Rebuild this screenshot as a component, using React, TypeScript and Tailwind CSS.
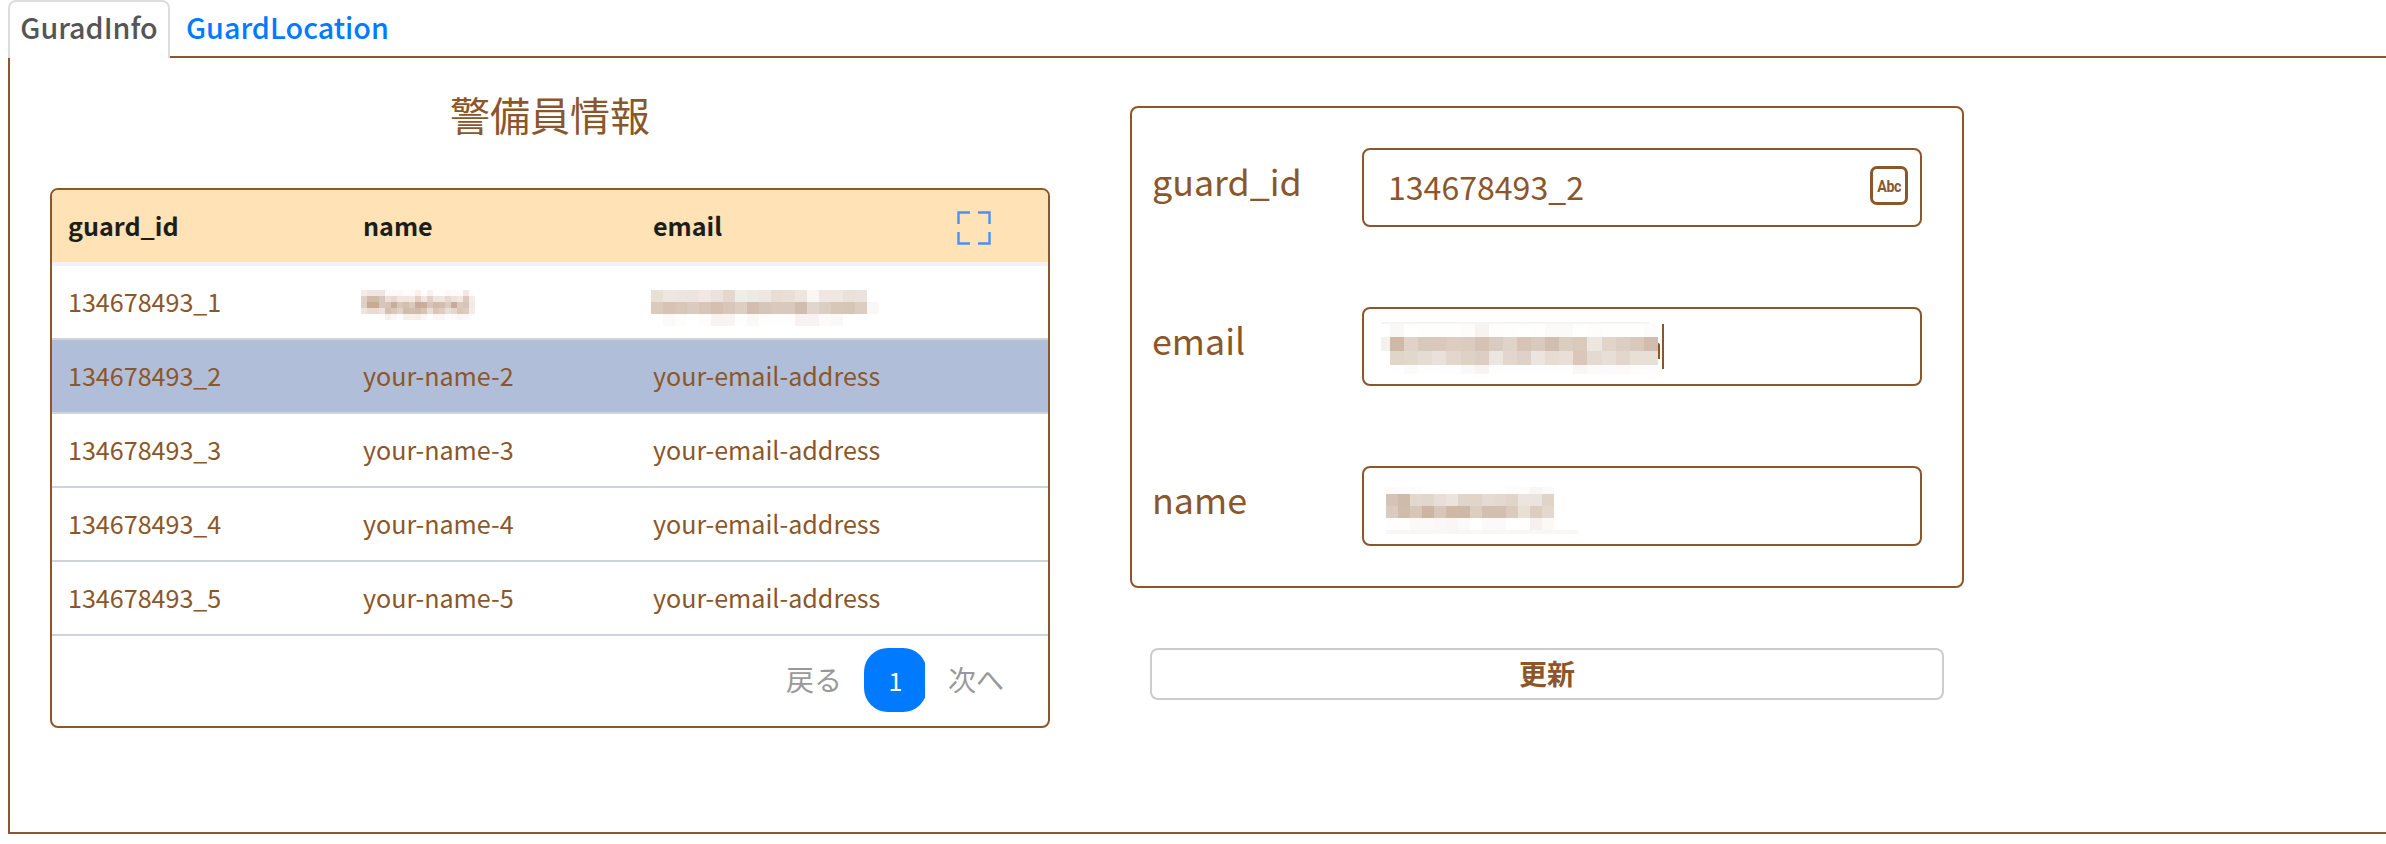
import React from "react";

const rows = [
  { id: "134678493_1", name: "", email: "" },
  { id: "134678493_2", name: "your-name-2", email: "your-email-address" },
  { id: "134678493_3", name: "your-name-3", email: "your-email-address" },
  { id: "134678493_4", name: "your-name-4", email: "your-email-address" },
  { id: "134678493_5", name: "your-name-5", email: "your-email-address" },
];

type Band = { y: number; h: number; x?: number; colors: string };

function Mosaic({ cell, width, height, bands, className }: { cell: number; width: number; height: number; bands: Band[]; className: string }) {
  return (
    <svg width={width} height={height} className={`overflow-visible ${className}`} shapeRendering="crispEdges">
      {bands.map((b, r) =>
        b.colors.split(" ").map((c, i) => (
          <rect key={`${r}-${i}`} x={(b.x ?? 0) + i * cell} y={b.y} width={cell} height={b.h} fill={`#${c}`} />
        )),
      )}
    </svg>
  );
}

const nameBands: Band[] = [
  { y: 0, h: 6, colors: "f3ece7 efe6e0 efe6e0 efe5e0 fdfaf8 fdfaf8 fcf8f6 fefdfc fefcfb f8f2ef fefdfc f8f3f0 fefdfc fefdfc fcf8f6 fdfaf8 fefcfb f1e8e3 fefdfc" },
  { y: 6, h: 6, colors: "e0d1c5 d0bba9 d0bba9 d8c6ba ece0da e6dad2 f0e5e0 efe4de f0e8e2 e1d0c6 f0e5df e0d2c7 efe5df efe6e0 e6d9d1 eee3dc f1e8e2 dccabf f4eeea" },
  { y: 12, h: 6, colors: "e0d0c4 c6aa92 c6aa92 dac5ba d8c4b6 c9ad9a dac6b9 d3bfae dbc9bc c8ab96 c9ae99 d8c5b8 d0bba8 d2beae dccbbf c9a999 dbc9bc d7c4b6 f1e9e4" },
  { y: 18, h: 6, colors: "f0e5de eadcd3 e9dbd2 eee2dc d4c0b1 d9c9bd e1d3c8 d1bca9 d2bdac d1bcab d6c4b5 eadfd8 d8c6b9 ddcdc2 eadfd8 e5d7cd d9c7bb dccbbf f4ece8" },
  { y: 24, h: 6, x: 18, colors: "fefdfc f6efeb fcf7f4 fefdfc f6f0ec f7f0ed f5efeb fbf6f3 fefdfc fcf6f3 fbf6f4 fefdfc fdf9f8 fbf6f4 fcf8f7" },
];

const emailBands: Band[] = [
  { y: 0, h: 12, colors: "e8dfd5 efe6e2 efe5e0 eee4df f2e7e5 ebe2de e4d7cf f0ece7 edeae4 eee7e1 e8ddd3 e9dfd6 eee5df f9f6f4 f1e7e2 f0e7e1 eae1db ebe2dd" },
  { y: 12, h: 12, colors: "dccbbd d6c3b6 d8c7b9 dbcabe d7c5b7 d3c0b1 d7c6b9 ddcec2 d2bdaf d8c5ba d9c8bc d9c8bc d1bdaf e2d5cd ddcec4 d7c7b9 d7c5b7 dccdc3 faf8f6" },
  { y: 24, h: 12, x: 12, colors: "fcfaf8 fdfdfb ffffff fefdfb f7f3f0 f8f4f1 fefefe faf9f8 fefefd fefefe fefefe f7f3f0 f7f3f0 fdfbfa fbf9f7" },
];

const emailFieldBands: Band[] = [
  { y: 0, h: 2, x: -9, colors: "f7f3f0 f7f3f0 f7f3f0 f7f3f0 f7f3f0 f7f3f0 f7f3f0 f7f3f0 f7f3f0 f7f3f0 f7f3f0 f7f3f0 f7f3f0 f7f3f0 f7f3f0 f7f3f0 f7f3f0 f7f3f0 f7f3f0" },
  { y: 15, h: 14, x: -9, colors: "f5f1ec" },
  { y: 2, h: 13, colors: "f9f8f7 ffffff fefefd fefefd fefefe fdfcfb f7f3ee fefdfc fefefe ffffff fefefe fbfaf9 fbfaf9 ffffff fefdfb fefefe fefefe fefefd fcfcfc" },
  { y: 15, h: 14, colors: "cfb9a6 e0d2c8 d9c8bc dac8bd ddccbf dcccbf d5c2b3 dbcabf e0d3c8 d6c4b7 dacabd d2beb0 dccdc1 dacabb ede6e0 e1d5ca ddcec3 dac8ba d1bcae" },
  { y: 29, h: 14, colors: "e1d5c8 e1d8cc e5dcd3 eae0dc e2d6cd ded1c6 ddcec4 ece5e0 e3d6ce dfd1c7 ece4df e6dcd2 e8dfd6 dac7b9 e4dad1 e7dfd6 e2d6cd e8dfd5 e8e0d6" },
  { y: 43, h: 9, colors: "fefefe fdfbfa fefefd fefefe fefdfd fbf9f7 f9f4f1 fefefc fefefe fefefe fefefe fefefd fefefe faf6f4 fcf9f7 fbf9f9 fcf9f8 fdfcfb fefdfc" },
];

const nameFieldBands: Band[] = [
  { y: 0, h: 7, colors: "fcfbf9 fdfcfb fdfcfb ffffff ffffff ffffff ffffff ffffff ffffff ffffff fdfcfc fdfcfa f8f6f4 fcfaf9" },
  { y: 7, h: 12, colors: "d5c4b6 cebbaa e3d8ce e2d7cd e8ddd8 ece3de e1d4ca e1d4c9 e5dbd2 e4d9d0 e1d5c9 ece4df ebe3de e0d3c8" },
  { y: 19, h: 12, colors: "dbcbbf d0bcad d8c6b9 ccb6a2 d8c6b8 ceb8a6 ceb8a6 dccdc1 d2bfb0 d2bfb0 dbcbbe e8dfd5 dccdc1 e3d7ce" },
  { y: 31, h: 12, colors: "fefefe fefefe fbf9f8 fcfaf8 faf7f6 faf6f3 fcfaf9 ffffff fbf9f9 fbf9f9 ffffff ffffff f6f1ee fcf8f5" },
  { y: 43, h: 4, colors: "f9f6f4 f9f6f4 f8f5f3 f9f6f4 f9f6f4 f8f5f3 f9f6f4 f9f6f4 f8f5f3 f9f6f4 f9f6f4 f8f5f3 f9f6f4 f9f6f4 f9f6f4 f9f6f4" },
];

function ExpandIcon() {
  return (
    <svg width="34" height="34" viewBox="0 0 34 34" fill="none" stroke="#4a90f5" strokeWidth="2.4">
      <path d="M1.5 13V1.5H13M21 1.5H32.5V13M32.5 21V32.5H21M13 32.5H1.5V21" />
    </svg>
  );
}

function Cell({ children, className }: { children?: React.ReactNode; className: string }) {
  return <div className={`flex items-center pb-[2px] ${className}`}>{children}</div>;
}

function GuardTable() {
  return (
    <div className="h-[540px] w-[1000px] overflow-hidden rounded-lg border-2 border-[#8b572a] bg-white text-[25.1px] leading-[36px]">
      <div className="flex h-[76px] border-b-4 border-[#f3f3f3] bg-[#ffe2b5] font-bold text-[#1d1e1a]">
        <Cell className="w-[311px] pl-4">guard_id</Cell>
        <Cell className="w-[290px]">name</Cell>
        <Cell className="w-[304px]">email</Cell>
        <div className="flex items-center pt-[3px]">
          <ExpandIcon />
        </div>
      </div>
      {rows.map((r, i) => (
        <div key={r.id} className={`flex h-[74px] border-b-2 border-[#ced4d9] ${i === 1 ? "bg-[#b1bed9]" : "bg-white"}`}>
          <Cell className="w-[311px] pl-4">{r.id}</Cell>
          <Cell className="w-[290px]">
            {r.name || <Mosaic className="mt-[7px] -ml-[2px]" cell={6} width={114} height={30} bands={nameBands} />}
          </Cell>
          <Cell className="w-[395px]">
            {r.email || <Mosaic className="mt-[13px] -ml-[2px]" cell={12} width={228} height={36} bands={emailBands} />}
          </Cell>
        </div>
      ))}
      <div className="flex h-[90px] items-center justify-end pr-[44px] pb-[2px] text-[28px] text-[#999999]">
        <span className="pb-[3px]">戻る</span>
        <span className="ml-[22px] w-[61px] overflow-hidden">
          <span className="flex h-16 w-[63px] items-center justify-center rounded-[24px] bg-[#007bff] text-[25px] text-white">1</span>
        </span>
        <span className="ml-[23px] pb-[3px]">次へ</span>
      </div>
    </div>
  );
}

function Field({ label, className, children }: { label: string; className: string; children: React.ReactNode }) {
  return (
    <div className={`flex ${className}`}>
      <label className="w-[230px] pt-[4px] pl-[20px] text-[35.8px] leading-[56px]">{label}</label>
      <div className="flex w-[560px] rounded-lg border-2 border-[#8b572a]">{children}</div>
    </div>
  );
}

function GuardForm() {
  return (
    <div className="flex h-[482px] w-[834px] flex-col gap-[80px] rounded-lg border-2 border-[#8b572a] pt-10">
      <Field label="guard_id" className="h-[79px]">
        <span className="flex-1 pl-6 text-[32.1px] leading-[73px]">134678493_2</span>
        <span className="mt-4 mr-3 flex h-[39px] w-[38px] items-center justify-center rounded-[7px] border-[3px] border-[#8b572a]">
          <span className="scale-x-[0.84] font-[Roboto] text-[17px] leading-[20px] font-bold tracking-[-0.5px]">Abc</span>
        </span>
      </Field>
      <Field label="email" className="h-[79px]">
        <Mosaic className="mt-[13px] ml-[26px]" cell={14.1} width={268} height={52} bands={emailFieldBands} />
        <span className="mt-[34px] h-4 w-[2px] rounded-tr-[2px] bg-[#8b572a]" />
        <span className="mt-[15px] ml-[2px] h-[45px] w-[2px] bg-[#8b572a]" />
      </Field>
      <Field label="name" className="h-[80px]">
        <Mosaic className="mt-[19px] ml-[22px]" cell={12} width={192} height={47} bands={nameFieldBands} />
      </Field>
    </div>
  );
}

export default function App() {
  return (
    <div className="h-[844px] w-full overflow-hidden bg-white pl-2 font-['Noto_Sans_CJK_JP',sans-serif] text-[#8b572a]">
      <nav className="relative z-10 flex h-[58px] w-fit text-[28.7px] leading-[40px] font-medium">
        <span className="w-[162px] rounded-t-lg border-2 border-b-0 border-[#dddddd] bg-white pt-[5px] text-center text-[#555555]">GuradInfo</span>
        <span className="h-[50px] pt-[7px] pl-4 text-[#007bff]">GuardLocation</span>
      </nav>
      <main className="-mt-[2px] flex h-[778px] border-y-2 border-l-2 border-[#8b572a]">
        <section className="ml-10 w-[1000px]">
          <h1 className="h-[130px] pt-[27px] text-center text-[40px] leading-[59px]">警備員情報</h1>
          <GuardTable />
        </section>
        <section className="mt-12 ml-20 w-[834px]">
          <GuardForm />
          <button className="mx-5 mt-[60px] flex h-[52px] w-[794px] items-center justify-center rounded-lg border-2 border-[#cccccc] pb-[3px] text-[28px] leading-[40px] font-bold">
            更新
          </button>
        </section>
      </main>
    </div>
  );
}
